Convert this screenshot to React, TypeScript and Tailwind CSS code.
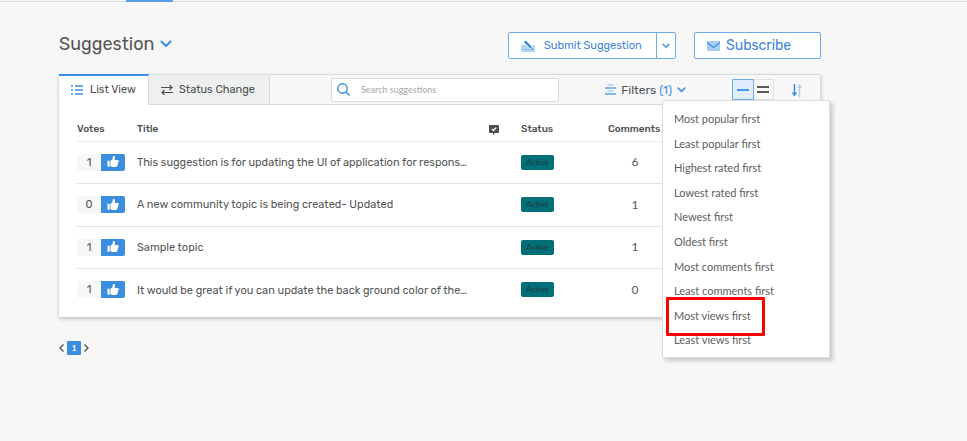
import React from "react";

const rubik = "font-[Rubik,Roboto,sans-serif]";
const lato = "font-[Lato,sans-serif]";

const suggestions = [
  { votes: 1, title: "This suggestion is for updating the UI of application for respons…", status: "Active", comments: 6 },
  { votes: 0, title: "A new community topic is being created- Updated", status: "Active", comments: 1 },
  { votes: 1, title: "Sample topic", status: "Active", comments: 1 },
  { votes: 1, title: "It would be great if you can update the back ground color of the…", status: "Active", comments: 0 },
];

const sortOptions = [
  "Most popular first",
  "Least popular first",
  "Highest rated first",
  "Lowest rated first",
  "Newest first",
  "Oldest first",
  "Most comments first",
  "Least comments first",
  "Most views first",
  "Least views first",
];

function Chevron({ className, width = 2 }: { className: string; width?: number }) {
  return (
    <svg viewBox="0 0 12 8" className={className} fill="none" stroke="#3b8de0" strokeWidth={width} strokeLinecap="round" strokeLinejoin="round" aria-hidden="true">
      <path d="M1.500 1.500 6 6l4.500-4.500" />
    </svg>
  );
}

function Thumb() {
  return (
    <svg viewBox="0 0 12 12" className="size-3" fill="#fff" aria-hidden="true">
      <path d="M.5 4.800h2.200v6H.5z" />
      <path d="M3.400 5 5.700 2.800V1C5.700.4 6.200 0 6.800.1c1 .2 1.400 1.200 1.200 2.200l-.4 1.800h3c.8 0 1.200.7 1 1.400L10.400 9.500c-.3 1-.9 1.400-1.800 1.400H5.300c-.8 0-1.300-.4-1.900-.8z" />
    </svg>
  );
}

function TopBar() {
  return (
    <div className="flex h-[2px] border-b border-[#d9dcdc]">
      <div className="ml-[126px] h-[2px] w-[47px] bg-[#5a9fe6]" />
    </div>
  );
}

function PageHeader() {
  return (
    <header className="flex items-start justify-between">
      <button className="flex items-center gap-[6px]">
        <h1 className="text-[18px] leading-6 text-[#555858]">Suggestion</h1>
        <Chevron className="h-2 w-3" />
      </button>
      <div className="flex gap-[18px] text-[#3f87dc]">
        <div className="flex h-[27px] rounded-[2px] border border-[#6dacec] bg-white">
          <button className="flex w-[147px] items-center gap-[9px] pl-3 text-[11px] whitespace-nowrap">
            <svg viewBox="0 0 14 12" className="h-3 w-[14px] shrink-0" fill="none" aria-hidden="true">
              <path d="M0 5h14v7H0z" fill="#b6d4f4" />
              <path d="M2 9.500h10" stroke="#8cbcef" />
              <path d="M3.500 1 10.500 7.500" stroke="#fff" strokeWidth="4" />
              <path d="m3.800 1.200 6.200 6.300" stroke="#2f7fd6" strokeWidth="2.200" />
              <path d="m10 7.500 2 2" stroke="#2f7fd6" />
            </svg>
            <span className="pt-px">Submit Suggestion</span>
          </button>
          <button aria-label="More submit options" className="flex w-[19px] items-center justify-center border-l border-[#6dacec]">
            <Chevron className="h-[6px] w-2" />
          </button>
        </div>
        <button className="flex h-[27px] w-[127px] items-center gap-[6px] rounded-[2px] border border-[#6dacec] bg-white pl-3 text-[14px]">
          <svg viewBox="0 0 13 10" className="h-[10px] w-[13px]" aria-hidden="true">
            <path d="M0 0h13v10H0z" fill="#a9cdf3" />
            <path d="m0 1.500 6.500 5 6.500-5" fill="none" stroke="#3b8de0" strokeWidth="1.200" />
          </svg>
          Subscribe
        </button>
      </div>
    </header>
  );
}

function SortMenu() {
  return (
    <ul className={`${lato} absolute top-[25px] -right-[10px] z-10 grid h-[258px] w-[168px] auto-rows-fr border border-[#dcdfdf] bg-white pt-[6px] pb-1 text-[11px] text-[#5c6060] shadow-[3px_3px_4px_rgba(0,0,0,0.18)]`}>
      {sortOptions.map((option) => (
        <li key={option} className="relative flex">
          <button className="flex w-full items-center pl-[11px]">{option}</button>
          {option === "Most views first" && (
            <span className="pointer-events-none absolute -top-[7px] left-[3px] z-10 h-[39px] w-[99px] rounded-[1px] border-3 border-[#fb0000]" />
          )}
        </li>
      ))}
    </ul>
  );
}

function Toolbar() {
  return (
    <div className="relative flex h-[31px] items-stretch border-t border-r border-[#d9dcdc] bg-[#f7f7f7]">
      <button className="-mt-px flex w-[90px] items-center gap-[7px] border-t-2 border-r border-t-[#3b8de0] border-r-[#d9dcdc] bg-white pb-[2px] pl-3 text-[11px] whitespace-nowrap text-[#4c5050]">
        <svg viewBox="0 0 12 10" className="h-[10px] w-3" stroke="#3b8de0" strokeWidth="1.300" aria-hidden="true">
          <path d="M0 1h2M0 5h2M0 9h2M4 1h8M4 5h8M4 9h8" />
        </svg>
        <span className="pt-[2px]">List View</span>
      </button>
      <button className="flex w-[121px] items-center gap-[6px] border-r border-b border-[#d9dcdc] bg-[#eef0f0] pl-3 text-[11px] whitespace-nowrap text-[#4c5050]">
        <svg viewBox="0 0 12 10" className="h-[10px] w-3" fill="none" stroke="#4c5050" strokeWidth="1.200" aria-hidden="true">
          <path d="M0 2.500h11M8.500 0 11 2.500 8.500 5M12 7.500H1M3.500 5 1 7.500 3.500 10" />
        </svg>
        <span className="pt-[2px]">Status Change</span>
      </button>
      <div className="flex flex-1 items-center border-b border-[#d9dcdc] pr-[17px] pl-[61px]">
        <label className="flex h-6 w-[228px] items-center gap-[11px] rounded-[2px] border border-[#d9dcdc] bg-white pl-[5px]">
          <svg viewBox="0 0 13 13" className="size-[13px] shrink-0" fill="none" stroke="#3b8de0" strokeWidth="1.400" aria-hidden="true">
            <circle cx="5.500" cy="5.500" r="4.700" />
            <path d="m9 9 3.500 3.500" />
          </svg>
          <input type="search" aria-label="Search suggestions" placeholder="Search suggestions" className={`${lato} w-full min-w-0 text-[9px] outline-none placeholder:text-[#a3a7a7]`} />
        </label>
        <div className="ml-auto flex items-center">
          <button className="flex items-center gap-[5px] text-[12px] text-[#4c5050]">
            <svg viewBox="0 0 11 11" className="size-[11px]" strokeWidth="1.600" aria-hidden="true">
              <path d="M2.500 1h6M2.500 7h6" stroke="#a9cdf3" />
              <path d="M0 4h11M0 10h11" stroke="#5a9fe6" />
            </svg>
            <span>Filters <span className="text-[#3b8de0]">(1)</span></span>
            <Chevron className="h-[6px] w-[9px]" />
          </button>
          <div className="ml-[46px] flex h-[21px] w-[42px]">
            <button aria-label="Compact rows" className="flex flex-1 items-center justify-center rounded-l-[1px] border border-[#6dacec] bg-[#dfedfc]">
              <span className="h-[2px] w-3 bg-[#4a96e4]" />
            </button>
            <button aria-label="Comfortable rows" className="flex flex-1 flex-col items-center justify-center gap-[3px] rounded-r-[1px] border border-l-0 border-[#e0e3e3] bg-[#f7f7f7]">
              <span className="h-[2px] w-3 bg-[#555b5b]" />
              <span className="h-[2px] w-3 bg-[#555b5b]" />
            </button>
          </div>
          <button aria-label="Sort" className="ml-[17px]">
            <svg viewBox="0 0 12 14" className="h-[14px] w-3" fill="none" aria-hidden="true">
              <path d="M8.500 14V3" stroke="#a9cdf3" strokeWidth="1.500" />
              <path d="M6 4.500 8.500 1 11 4.500z" fill="#a9cdf3" />
              <path d="M3.500 1v10" stroke="#3b8de0" strokeWidth="1.500" />
              <path d="M.8 9.500h5.400L3.500 13.500z" fill="#3b8de0" />
            </svg>
          </button>
        </div>
      </div>
      <SortMenu />
    </div>
  );
}

function SuggestionTable() {
  return (
    <div className="px-[18px] pt-3 pb-[6px]">
      <table className="w-full table-fixed text-left text-[11px] text-[#555858]">
        <thead>
          <tr className="h-6 border-b border-[#ebeded] text-[10px] text-[#4c5050]">
            <th className="w-[60px] pt-[2px] font-medium">Votes</th>
            <th className="pt-[2px] font-medium">Title</th>
            <th className="w-[32px] pt-[2px]" aria-label="Answered">
              <svg viewBox="0 0 10 10" className="size-[10px]" aria-hidden="true">
                <path d="M1 0h8q1 0 1 1v6q0 1-1 1H6l-2 2V8H1Q0 8 0 7V1q0-1 1-1" fill="#4c5050" />
                <path d="m3 4 1.500 1.500L7.200 2.600" stroke="#fff" strokeWidth="1.300" fill="none" />
              </svg>
            </th>
            <th className="w-[87px] pt-[2px] font-medium">Status</th>
            <th className="w-[195px] pt-[2px] font-medium">Comments</th>
          </tr>
        </thead>
        <tbody>
          {suggestions.map((item) => (
            <tr key={item.title} className="h-[42px] border-b border-[#e1e4e4] last:border-b-0 even:h-[43px]">
              <td>
                <div className="flex h-[17px] w-12 overflow-hidden rounded-[2px] bg-[#f7f7f7] leading-[17px]">
                  <span className="w-6 text-center">{item.votes}</span>
                  <button aria-label="Vote" className="flex w-6 items-center justify-center bg-[#3b8de0]">
                    <Thumb />
                  </button>
                </div>
              </td>
              <td className="truncate pt-[2px]">{item.title}</td>
              <td />
              <td>
                <span className={`${lato} block h-[15px] w-[33px] rounded-[2px] bg-[#006f78] text-center text-[8px] leading-[15px] text-[#26383a]`}>{item.status}</span>
              </td>
              <td className={`${lato} text-[12px]`}>
                <span className="block w-[54px] text-center">{item.comments}</span>
              </td>
            </tr>
          ))}
        </tbody>
      </table>
    </div>
  );
}

function Pagination() {
  return (
    <nav aria-label="Pages" className="mt-6 flex items-center gap-[3px]">
      <button aria-label="Previous page">
        <svg viewBox="0 0 5 8" className="h-2 w-[5px]" fill="none" stroke="#4c5050" strokeWidth="1.300" aria-hidden="true"><path d="M4.500.5 1 4l3.500 3.500" /></svg>
      </button>
      <button aria-current="page" className={`${lato} h-[14px] w-[14px] rounded-[1px] bg-[#3b8de0] text-[8px] leading-[14px] font-bold text-white`}>1</button>
      <button aria-label="Next page">
        <svg viewBox="0 0 5 8" className="h-2 w-[5px]" fill="none" stroke="#4c5050" strokeWidth="1.300" aria-hidden="true"><path d="M.5.5 4 4 .5 7.500" /></svg>
      </button>
    </nav>
  );
}

export default function App() {
  return (
    <div className={`${rubik} min-h-screen bg-[#f7f7f7]`}>
      <TopBar />
      <main className="pt-[30px] pr-[146px] pl-[59px]">
        <PageHeader />
        <section className="mt-[15px] bg-white shadow-[0_2px_4px_rgba(0,0,0,0.22)]">
          <Toolbar />
          <SuggestionTable />
        </section>
        <Pagination />
      </main>
    </div>
  );
}
